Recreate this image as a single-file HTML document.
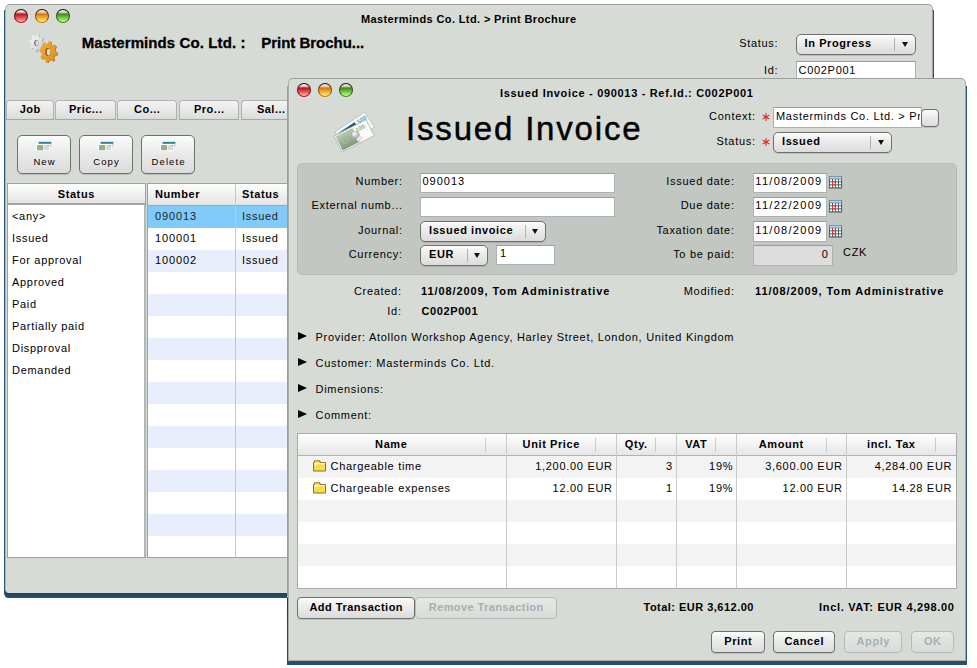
<!DOCTYPE html><html><head><meta charset="utf-8"><style>
html,body{margin:0;padding:0;background:#fff;width:977px;height:668px;overflow:hidden;position:relative;font-family:"Liberation Sans",sans-serif;}
.t{position:absolute;white-space:pre;font-family:"Liberation Sans",sans-serif;}
.r{position:absolute;}
</style></head><body>
<div class="r" style="left:4px;top:10px;width:930px;height:588px;background:#2a5272;border-radius:0 0 5px 5px;"></div>
<div class="r" style="left:5px;top:590px;width:928px;height:8px;background:linear-gradient(#1e3a50,#27506e);border-radius:0 0 4px 4px;"></div>
<div class="r" style="left:5px;top:4px;width:928px;height:589px;background:#d7dbd6;border-top:1px solid #9c9e9b;border-left:1px solid #b3b6b1;border-right:1px solid #a5a7a4;border-radius:5px 5px 4px 4px;box-sizing:border-box;"></div>
<div class="r" style="left:14px;top:9px;width:14px;height:14px;border-radius:50%;background:linear-gradient(#1a0606,#b81818);"></div>
<div class="r" style="left:15px;top:10.1px;width:12px;height:12.1px;border-radius:50%;background:linear-gradient(#f4eeee 0%,#e8d0d0 18%,#b81818 34%,#e86060 70%,#ffb8b0 100%);"></div>
<div class="r" style="left:35px;top:9px;width:14px;height:14px;border-radius:50%;background:linear-gradient(#1e0e00,#d87808);"></div>
<div class="r" style="left:36px;top:10.1px;width:12px;height:12.1px;border-radius:50%;background:linear-gradient(#f4eeee 0%,#e8d0d0 18%,#d87808 34%,#f8b838 70%,#fff890 100%);"></div>
<div class="r" style="left:56px;top:9px;width:14px;height:14px;border-radius:50%;background:linear-gradient(#061806,#3e8c18);"></div>
<div class="r" style="left:57px;top:10.1px;width:12px;height:12.1px;border-radius:50%;background:linear-gradient(#f4eeee 0%,#e8d0d0 18%,#3e8c18 34%,#80d050 70%,#c8ff90 100%);"></div>
<div class="t" style="left:361px;top:13.04px;font-size:11px;font-weight:bold;letter-spacing:0.38px;color:#000;line-height:12.65px;">Masterminds Co. Ltd. &gt; Print Brochure</div>
<svg class="r" style="left:0;top:0" width="80" height="80"><defs><linearGradient id="gs" x1="0" y1="0" x2="1" y2="1"><stop offset="0" stop-color="#fafafa"/><stop offset="1" stop-color="#c8c8c8"/></linearGradient><linearGradient id="go" x1="0" y1="0" x2="1" y2="1"><stop offset="0" stop-color="#f2ac3a"/><stop offset="1" stop-color="#d98f24"/></linearGradient></defs><path d="M43.39,42.97 L44.90,43.62 L44.52,46.23 L42.91,46.22 L41.92,48.09 L42.60,49.84 L40.80,51.35 L39.66,49.99 L37.86,50.47 L37.31,52.28 L35.15,51.82 L35.15,49.89 L33.59,48.70 L32.14,49.52 L30.87,47.36 L32.01,45.99 L31.61,43.83 L30.10,43.18 L30.48,40.57 L32.09,40.58 L33.08,38.71 L32.40,36.96 L34.20,35.45 L35.34,36.81 L37.14,36.33 L37.69,34.52 L39.85,34.98 L39.85,36.91 L41.41,38.10 L42.86,37.28 L44.13,39.44 L42.99,40.81Z" fill="#a0a0a0"/><path d="M42.49,42.37 L44.00,43.02 L43.62,45.63 L42.01,45.62 L41.02,47.49 L41.70,49.24 L39.90,50.75 L38.76,49.39 L36.96,49.87 L36.41,51.68 L34.25,51.22 L34.25,49.29 L32.69,48.10 L31.24,48.92 L29.97,46.76 L31.11,45.39 L30.71,43.23 L29.20,42.58 L29.58,39.97 L31.19,39.98 L32.18,38.11 L31.50,36.36 L33.30,34.85 L34.44,36.21 L36.24,35.73 L36.79,33.92 L38.95,34.38 L38.95,36.31 L40.51,37.50 L41.96,36.68 L43.23,38.84 L42.09,40.21Z" fill="url(#gs)"/><ellipse cx="36.300000000000004" cy="43.099999999999994" rx="2.2" ry="3.0" fill="#777"/><ellipse cx="36.9" cy="43.099999999999994" rx="1.54" ry="2.55" fill="#d7dbd6"/><path d="M56.19,51.89 L58.10,52.67 L57.64,55.80 L55.62,55.75 L54.44,57.97 L55.33,60.14 L53.16,61.96 L51.77,60.22 L49.63,60.78 L48.97,63.08 L46.37,62.53 L46.41,60.10 L44.56,58.69 L42.75,59.76 L41.23,57.16 L42.69,55.48 L42.21,52.91 L40.30,52.13 L40.76,49.00 L42.78,49.05 L43.96,46.83 L43.07,44.66 L45.24,42.84 L46.63,44.58 L48.77,44.02 L49.43,41.72 L52.03,42.27 L51.99,44.70 L53.84,46.11 L55.65,45.04 L57.17,47.64 L55.71,49.32Z" fill="#b8741a"/><path d="M55.29,51.29 L57.20,52.07 L56.74,55.20 L54.72,55.15 L53.54,57.37 L54.43,59.54 L52.26,61.36 L50.87,59.62 L48.73,60.18 L48.07,62.48 L45.47,61.93 L45.51,59.50 L43.66,58.09 L41.85,59.16 L40.33,56.56 L41.79,54.88 L41.31,52.31 L39.40,51.53 L39.86,48.40 L41.88,48.45 L43.06,46.23 L42.17,44.06 L44.34,42.24 L45.73,43.98 L47.87,43.42 L48.53,41.12 L51.13,41.67 L51.09,44.10 L52.94,45.51 L54.75,44.44 L56.27,47.04 L54.81,48.72Z" fill="url(#go)"/><ellipse cx="48.0" cy="52.099999999999994" rx="2.6" ry="4.0" fill="#8a5010"/><ellipse cx="48.599999999999994" cy="52.099999999999994" rx="1.8199999999999998" ry="3.4" fill="#d7dbd6"/></svg>
<div class="t" style="left:81.7px;top:34.42px;font-size:15px;font-weight:bold;letter-spacing:0.1px;color:#000;line-height:17.25px;-webkit-text-stroke:0.3px #000;">Masterminds Co. Ltd. :</div>
<div class="t" style="left:261.2px;top:34.42px;font-size:15px;font-weight:bold;letter-spacing:-0.02px;color:#000;line-height:17.25px;-webkit-text-stroke:0.3px #000;">Print Brochu...</div>
<div class="t" style="left:78.30000000000003px;width:700px;text-align:right;top:37.05px;font-size:11px;font-weight:normal;letter-spacing:0.7px;color:#000;line-height:12.65px;">Status:</div>
<div class="r" style="left:796px;top:34px;width:120px;height:21px;background:linear-gradient(#fbfbfb,#e9e9e9 50%,#dcdcdc);border:1px solid #6f706e;border-radius:5px;box-sizing:border-box;box-shadow:0 1px 0 rgba(0,0,0,.12);"></div>
<div class="r" style="left:894px;top:38px;width:1px;height:13px;background:#b0b0b0;"></div>
<div class="r" style="left:901.5px;top:42.2px;width:0;height:0;border-left:3.5px solid transparent;border-right:3.5px solid transparent;border-top:5px solid #111;"></div>
<div class="t" style="left:804.5px;top:37.05px;font-size:11px;font-weight:bold;letter-spacing:0.6px;color:#000;line-height:12.65px;">In Progress</div>
<div class="t" style="left:78.30000000000003px;width:700px;text-align:right;top:64.05px;font-size:11px;font-weight:normal;letter-spacing:0.7px;color:#000;line-height:12.65px;">Id:</div>
<div class="r" style="left:796px;top:61px;width:120px;height:29px;background:#fff;border:1px solid #aeb1b3;border-top-color:#9a9da0;box-sizing:border-box;"></div>
<div class="t" style="left:798.5px;top:64.05px;font-size:11px;font-weight:normal;letter-spacing:0.7px;color:#000;line-height:12.65px;">C002P001</div>
<div class="r" style="left:6px;top:100px;width:48px;height:20px;background:linear-gradient(#f3f3f3,#dcdcdc);border:1px solid #b2b4b1;border-bottom-color:#a6a8a5;border-radius:4px 4px 0 0;box-sizing:border-box;"></div>
<div class="t" style="left:-319.75px;width:700px;text-align:center;top:103.05px;font-size:11px;font-weight:bold;letter-spacing:0.5px;color:#000;line-height:12.65px;">Job</div>
<div class="r" style="left:55px;top:100px;width:61px;height:20px;background:linear-gradient(#f3f3f3,#dcdcdc);border:1px solid #b2b4b1;border-bottom-color:#a6a8a5;border-radius:4px 4px 0 0;box-sizing:border-box;"></div>
<div class="t" style="left:-264.25px;width:700px;text-align:center;top:103.05px;font-size:11px;font-weight:bold;letter-spacing:0.5px;color:#000;line-height:12.65px;">Pric...</div>
<div class="r" style="left:117px;top:100px;width:60px;height:20px;background:linear-gradient(#f3f3f3,#dcdcdc);border:1px solid #b2b4b1;border-bottom-color:#a6a8a5;border-radius:4px 4px 0 0;box-sizing:border-box;"></div>
<div class="t" style="left:-202.75px;width:700px;text-align:center;top:103.05px;font-size:11px;font-weight:bold;letter-spacing:0.5px;color:#000;line-height:12.65px;">Co...</div>
<div class="r" style="left:179px;top:100px;width:60px;height:20px;background:linear-gradient(#f3f3f3,#dcdcdc);border:1px solid #b2b4b1;border-bottom-color:#a6a8a5;border-radius:4px 4px 0 0;box-sizing:border-box;"></div>
<div class="t" style="left:-140.75px;width:700px;text-align:center;top:103.05px;font-size:11px;font-weight:bold;letter-spacing:0.5px;color:#000;line-height:12.65px;">Pro...</div>
<div class="r" style="left:241px;top:100px;width:60px;height:20px;background:linear-gradient(#f3f3f3,#dcdcdc);border:1px solid #b2b4b1;border-bottom-color:#a6a8a5;border-radius:4px 4px 0 0;box-sizing:border-box;"></div>
<div class="t" style="left:-78.75px;width:700px;text-align:center;top:103.05px;font-size:11px;font-weight:bold;letter-spacing:0.5px;color:#000;line-height:12.65px;">Sal...</div>
<div class="r" style="left:17px;top:135px;width:54px;height:39px;background:linear-gradient(#fbfbfb,#e9e9e9 50%,#dcdcdc);border:1px solid #6f706e;border-radius:5px;box-sizing:border-box;box-shadow:0 1px 0 rgba(0,0,0,.12);"></div>
<svg class="r" style="left:34.0px;top:139px" width="20" height="14" viewBox="34 139 20 14"><rect x="38" y="141" width="14" height="7" fill="#fff"/><rect x="38.6" y="141.8" width="12.8" height="2" fill="#2d7f92"/><rect x="50.4" y="144" width="1" height="3.5" fill="#bbb"/><rect x="36" y="144" width="14" height="7" fill="#fff"/><rect x="37" y="145" width="6" height="5.3" fill="#98b088"/><rect x="43.5" y="145.2" width="5.6" height="5" fill="#d9d9d9"/><rect x="47.5" y="145" width="1.6" height="1" fill="#7ab070"/></svg>
<div class="t" style="left:-305.45px;width:700px;text-align:center;top:157.40px;font-size:9.5px;font-weight:normal;letter-spacing:1.1px;color:#000;line-height:10.92px;">New</div>
<div class="r" style="left:79px;top:135px;width:54px;height:39px;background:linear-gradient(#fbfbfb,#e9e9e9 50%,#dcdcdc);border:1px solid #6f706e;border-radius:5px;box-sizing:border-box;box-shadow:0 1px 0 rgba(0,0,0,.12);"></div>
<svg class="r" style="left:96.0px;top:139px" width="20" height="14" viewBox="34 139 20 14"><rect x="38" y="141" width="14" height="7" fill="#fff"/><rect x="38.6" y="141.8" width="12.8" height="2" fill="#2d7f92"/><rect x="50.4" y="144" width="1" height="3.5" fill="#bbb"/><rect x="36" y="144" width="14" height="7" fill="#fff"/><rect x="37" y="145" width="6" height="5.3" fill="#98b088"/><rect x="43.5" y="145.2" width="5.6" height="5" fill="#d9d9d9"/><rect x="47.5" y="145" width="1.6" height="1" fill="#7ab070"/></svg>
<div class="t" style="left:-243.45px;width:700px;text-align:center;top:157.40px;font-size:9.5px;font-weight:normal;letter-spacing:1.1px;color:#000;line-height:10.92px;">Copy</div>
<div class="r" style="left:141px;top:135px;width:54px;height:39px;background:linear-gradient(#fbfbfb,#e9e9e9 50%,#dcdcdc);border:1px solid #6f706e;border-radius:5px;box-sizing:border-box;box-shadow:0 1px 0 rgba(0,0,0,.12);"></div>
<svg class="r" style="left:158.0px;top:139px" width="20" height="14" viewBox="34 139 20 14"><rect x="38" y="141" width="14" height="7" fill="#fff"/><rect x="38.6" y="141.8" width="12.8" height="2" fill="#2d7f92"/><rect x="50.4" y="144" width="1" height="3.5" fill="#bbb"/><rect x="36" y="144" width="14" height="7" fill="#fff"/><rect x="37" y="145" width="6" height="5.3" fill="#98b088"/><rect x="43.5" y="145.2" width="5.6" height="5" fill="#d9d9d9"/><rect x="47.5" y="145" width="1.6" height="1" fill="#7ab070"/></svg>
<div class="t" style="left:-181.45px;width:700px;text-align:center;top:157.40px;font-size:9.5px;font-weight:normal;letter-spacing:1.1px;color:#000;line-height:10.92px;">Delete</div>
<div class="r" style="left:7px;top:183px;width:139px;height:375px;background:#fff;border:1px solid #9fa19e;box-sizing:border-box;"></div>
<div class="r" style="left:8px;top:184px;width:137px;height:21px;background:linear-gradient(#fdfdfd,#e4e4e4);border-bottom:2px solid #a4a6a3;box-sizing:border-box;"></div>
<div class="r" style="left:144px;top:205px;width:2px;height:352px;background:#b5b7b4;"></div>
<div class="t" style="left:-273.7px;width:700px;text-align:center;top:188.04px;font-size:11px;font-weight:bold;letter-spacing:0.6px;color:#000;line-height:12.65px;">Status</div>
<div class="t" style="left:12px;top:210.04px;font-size:11px;font-weight:normal;letter-spacing:0.7px;color:#000;line-height:12.65px;">&lt;any&gt;</div>
<div class="t" style="left:12px;top:232.04px;font-size:11px;font-weight:normal;letter-spacing:0.7px;color:#000;line-height:12.65px;">Issued</div>
<div class="t" style="left:12px;top:254.04px;font-size:11px;font-weight:normal;letter-spacing:0.7px;color:#000;line-height:12.65px;">For approval</div>
<div class="t" style="left:12px;top:276.05px;font-size:11px;font-weight:normal;letter-spacing:0.7px;color:#000;line-height:12.65px;">Approved</div>
<div class="t" style="left:12px;top:298.05px;font-size:11px;font-weight:normal;letter-spacing:0.7px;color:#000;line-height:12.65px;">Paid</div>
<div class="t" style="left:12px;top:320.05px;font-size:11px;font-weight:normal;letter-spacing:0.7px;color:#000;line-height:12.65px;">Partially paid</div>
<div class="t" style="left:12px;top:342.05px;font-size:11px;font-weight:normal;letter-spacing:0.7px;color:#000;line-height:12.65px;">Dispproval</div>
<div class="t" style="left:12px;top:364.05px;font-size:11px;font-weight:normal;letter-spacing:0.7px;color:#000;line-height:12.65px;">Demanded</div>
<div class="r" style="left:147px;top:183px;width:153px;height:375px;background:#fff;border:1px solid #9fa19e;box-sizing:border-box;"></div>
<div class="r" style="left:148px;top:184px;width:152px;height:22px;background:linear-gradient(#fdfdfd,#e4e4e4);border-bottom:1px solid #a4a6a3;box-sizing:border-box;"></div>
<div class="r" style="left:148px;top:206px;width:152px;height:22px;background:#80cbfa;"></div>
<div class="r" style="left:148px;top:250px;width:152px;height:22px;background:#e8eefb;"></div>
<div class="r" style="left:148px;top:294px;width:152px;height:22px;background:#e8eefb;"></div>
<div class="r" style="left:148px;top:338px;width:152px;height:22px;background:#e8eefb;"></div>
<div class="r" style="left:148px;top:382px;width:152px;height:22px;background:#e8eefb;"></div>
<div class="r" style="left:148px;top:426px;width:152px;height:22px;background:#e8eefb;"></div>
<div class="r" style="left:148px;top:470px;width:152px;height:22px;background:#e8eefb;"></div>
<div class="r" style="left:148px;top:514px;width:152px;height:22px;background:#e8eefb;"></div>
<div class="r" style="left:235px;top:184px;width:1px;height:373px;background:#c4c6c3;"></div>
<div class="t" style="left:155px;top:188.04px;font-size:11px;font-weight:bold;letter-spacing:0.6px;color:#000;line-height:12.65px;">Number</div>
<div class="t" style="left:242px;top:188.04px;font-size:11px;font-weight:bold;letter-spacing:0.6px;color:#000;line-height:12.65px;">Status</div>
<div class="t" style="left:155px;top:210.04px;font-size:11px;font-weight:normal;letter-spacing:0.9px;color:#222;line-height:12.65px;">090013</div>
<div class="t" style="left:242px;top:210.04px;font-size:11px;font-weight:normal;letter-spacing:0.7px;color:#222;line-height:12.65px;">Issued</div>
<div class="t" style="left:155px;top:232.04px;font-size:11px;font-weight:normal;letter-spacing:0.9px;color:#000;line-height:12.65px;">100001</div>
<div class="t" style="left:242px;top:232.04px;font-size:11px;font-weight:normal;letter-spacing:0.7px;color:#000;line-height:12.65px;">Issued</div>
<div class="t" style="left:155px;top:254.04px;font-size:11px;font-weight:normal;letter-spacing:0.9px;color:#000;line-height:12.65px;">100002</div>
<div class="t" style="left:242px;top:254.04px;font-size:11px;font-weight:normal;letter-spacing:0.7px;color:#000;line-height:12.65px;">Issued</div>
<div class="r" style="left:287px;top:598px;width:680px;height:67px;background:linear-gradient(#1e3a50,#27506e);"></div>
<div class="r" style="left:966px;top:86px;width:1px;height:579px;background:#2a5272;"></div>
<div class="r" style="left:287px;top:86px;width:1px;height:512px;background:#9a9d99;"></div>
<div class="r" style="left:288px;top:78px;width:678px;height:583px;background:#d7dbd6;border-top:1px solid #9c9e9b;border-left:1px solid #a9aca7;border-right:1px solid #a5a7a4;border-bottom:1px solid #a9aba7;border-radius:5px 5px 0 0;box-sizing:border-box;"></div>
<div class="r" style="left:297px;top:83px;width:14px;height:14px;border-radius:50%;background:linear-gradient(#1a0606,#b81818);"></div>
<div class="r" style="left:298px;top:84.1px;width:12px;height:12.1px;border-radius:50%;background:linear-gradient(#f4eeee 0%,#e8d0d0 18%,#b81818 34%,#e86060 70%,#ffb8b0 100%);"></div>
<div class="r" style="left:318px;top:83px;width:14px;height:14px;border-radius:50%;background:linear-gradient(#1e0e00,#d87808);"></div>
<div class="r" style="left:319px;top:84.1px;width:12px;height:12.1px;border-radius:50%;background:linear-gradient(#f4eeee 0%,#e8d0d0 18%,#d87808 34%,#f8b838 70%,#fff890 100%);"></div>
<div class="r" style="left:339px;top:83px;width:14px;height:14px;border-radius:50%;background:linear-gradient(#061806,#3e8c18);"></div>
<div class="r" style="left:340px;top:84.1px;width:12px;height:12.1px;border-radius:50%;background:linear-gradient(#f4eeee 0%,#e8d0d0 18%,#3e8c18 34%,#80d050 70%,#c8ff90 100%);"></div>
<div class="t" style="left:500px;top:87.05px;font-size:11px;font-weight:bold;letter-spacing:0.68px;color:#000;line-height:12.65px;">Issued Invoice - 090013 - Ref.Id.: C002P001</div>
<svg class="r" style="left:320px;top:100px" width="70" height="70" viewBox="0 0 70 70">
<defs><linearGradient id="tb" x1="0" x2="1"><stop offset="0" stop-color="#2f7f9a"/><stop offset="1" stop-color="#1a4f66"/></linearGradient>
<linearGradient id="gb" x1="0" y1="0" x2="0" y2="1"><stop offset="0" stop-color="#b8ccb0"/><stop offset="1" stop-color="#7f9a76"/></linearGradient>
<radialGradient id="ball" cx="0.4" cy="0.35" r="0.7"><stop offset="0" stop-color="#ffffff"/><stop offset="1" stop-color="#9a9a9a"/></radialGradient></defs>
<g transform="translate(15,31.7) rotate(-33.7)">
<rect x="0" y="0" width="35.5" height="18" fill="#f6f6f6" stroke="#b9bcb9" stroke-width="0.8"/>
<rect x="1.5" y="3" width="20" height="4.5" fill="url(#tb)"/>
<text x="24" y="7" font-family="Liberation Sans" font-size="6" font-weight="bold" fill="#5aa0c8">500</text>
</g>
<g transform="translate(14,36) rotate(-27)">
<rect x="0" y="0" width="36" height="18" fill="#fbfbfb" stroke="#b0b4b0" stroke-width="0.8"/>
<rect x="1.2" y="1.2" width="19" height="15.6" fill="url(#gb)"/>
<circle cx="8" cy="9" r="3.2" fill="none" stroke="#a9bca2" stroke-width="0.8"/>
<text x="22" y="7" font-family="Liberation Sans" font-size="6" font-weight="bold" fill="#8fb088">100</text>
<circle cx="20" cy="8.5" r="3.8" fill="url(#ball)"/>
<ellipse cx="21.5" cy="14" rx="3.2" ry="2.2" fill="#e2e2e2"/>
</g></svg>
<div class="t" style="left:406px;top:110.13px;font-size:33px;font-weight:normal;letter-spacing:1.82px;color:#000;line-height:37.95px;-webkit-text-stroke:0.45px #000;">Issued Invoice</div>
<div class="t" style="left:55.7px;width:700px;text-align:right;top:110.05px;font-size:11px;font-weight:normal;letter-spacing:0.7px;color:#000;line-height:12.65px;">Context:</div>
<svg class="r" style="left:761.2px;top:112.2px" width="10" height="10" viewBox="-5 -5 10 10"><g stroke="#e02424" stroke-width="1.05" stroke-linecap="round"><line x1="0" y1="-3.4" x2="0" y2="3.4"/><line x1="-2.95" y1="-1.7" x2="2.95" y2="1.7"/><line x1="-2.95" y1="1.7" x2="2.95" y2="-1.7"/></g></svg>
<div class="r" style="left:773px;top:107px;width:149px;height:21px;background:#fff;border:1px solid #aeb1b3;border-top-color:#9a9da0;box-sizing:border-box;"></div>
<div class="t" style="left:776px;top:110.05px;font-size:11px;font-weight:normal;letter-spacing:0.7px;color:#000;line-height:12.65px;width:144px;overflow:hidden;">Masterminds Co. Ltd. &gt; Pr</div>
<div class="r" style="left:921px;top:109px;width:18px;height:18px;background:linear-gradient(#fbfbfb,#e9e9e9 50%,#dcdcdc);border:1px solid #6f706e;border-radius:4px;box-sizing:border-box;box-shadow:0 1px 0 rgba(0,0,0,.12);"></div>
<div class="t" style="left:55.7px;width:700px;text-align:right;top:135.04px;font-size:11px;font-weight:normal;letter-spacing:0.7px;color:#000;line-height:12.65px;">Status:</div>
<svg class="r" style="left:761.2px;top:137.2px" width="10" height="10" viewBox="-5 -5 10 10"><g stroke="#e02424" stroke-width="1.05" stroke-linecap="round"><line x1="0" y1="-3.4" x2="0" y2="3.4"/><line x1="-2.95" y1="-1.7" x2="2.95" y2="1.7"/><line x1="-2.95" y1="1.7" x2="2.95" y2="-1.7"/></g></svg>
<div class="r" style="left:773px;top:132px;width:119px;height:21px;background:linear-gradient(#fbfbfb,#e9e9e9 50%,#dcdcdc);border:1px solid #6f706e;border-radius:5px;box-sizing:border-box;box-shadow:0 1px 0 rgba(0,0,0,.12);"></div>
<div class="r" style="left:870px;top:136px;width:1px;height:13px;background:#b0b0b0;"></div>
<div class="r" style="left:877.5px;top:140.2px;width:0;height:0;border-left:3.5px solid transparent;border-right:3.5px solid transparent;border-top:5px solid #111;"></div>
<div class="t" style="left:782px;top:135.04px;font-size:11px;font-weight:bold;letter-spacing:0.6px;color:#000;line-height:12.65px;">Issued</div>
<div class="r" style="left:297px;top:163px;width:660px;height:112px;background:#c3c7c2;border:1px solid #b7bbb6;border-radius:5px;box-sizing:border-box;"></div>
<div class="t" style="left:-297.3px;width:700px;text-align:right;top:175.04px;font-size:11px;font-weight:normal;letter-spacing:0.7px;color:#000;line-height:12.65px;">Number:</div>
<div class="t" style="left:-297.3px;width:700px;text-align:right;top:199.04px;font-size:11px;font-weight:normal;letter-spacing:0.7px;color:#000;line-height:12.65px;">External numb...</div>
<div class="t" style="left:-297.3px;width:700px;text-align:right;top:224.04px;font-size:11px;font-weight:normal;letter-spacing:0.7px;color:#000;line-height:12.65px;">Journal:</div>
<div class="t" style="left:-297.3px;width:700px;text-align:right;top:248.04px;font-size:11px;font-weight:normal;letter-spacing:0.7px;color:#000;line-height:12.65px;">Currency:</div>
<div class="r" style="left:420px;top:173px;width:195px;height:20px;background:#fff;border:1px solid #aeb1b3;border-top-color:#9a9da0;box-sizing:border-box;"></div>
<div class="t" style="left:422.5px;top:175.04px;font-size:11px;font-weight:normal;letter-spacing:1.0px;color:#000;line-height:12.65px;">090013</div>
<div class="r" style="left:420px;top:197px;width:195px;height:20px;background:#fff;border:1px solid #aeb1b3;border-top-color:#9a9da0;box-sizing:border-box;"></div>
<div class="r" style="left:420px;top:221px;width:126px;height:21px;background:linear-gradient(#fbfbfb,#e9e9e9 50%,#dcdcdc);border:1px solid #6f706e;border-radius:5px;box-sizing:border-box;box-shadow:0 1px 0 rgba(0,0,0,.12);"></div>
<div class="r" style="left:525px;top:225px;width:1px;height:13px;background:#b0b0b0;"></div>
<div class="r" style="left:532.0px;top:229.2px;width:0;height:0;border-left:3.5px solid transparent;border-right:3.5px solid transparent;border-top:5px solid #111;"></div>
<div class="t" style="left:429px;top:224.04px;font-size:11px;font-weight:bold;letter-spacing:0.6px;color:#000;line-height:12.65px;">Issued invoice</div>
<div class="r" style="left:420px;top:245px;width:68px;height:21px;background:linear-gradient(#fbfbfb,#e9e9e9 50%,#dcdcdc);border:1px solid #6f706e;border-radius:5px;box-sizing:border-box;box-shadow:0 1px 0 rgba(0,0,0,.12);"></div>
<div class="r" style="left:467px;top:249px;width:1px;height:13px;background:#b0b0b0;"></div>
<div class="r" style="left:474.0px;top:253.2px;width:0;height:0;border-left:3.5px solid transparent;border-right:3.5px solid transparent;border-top:5px solid #111;"></div>
<div class="t" style="left:429px;top:248.04px;font-size:11px;font-weight:bold;letter-spacing:0.6px;color:#000;line-height:12.65px;">EUR</div>
<div class="r" style="left:496px;top:245px;width:59px;height:20px;background:#fff;border:1px solid #aeb1b3;border-top-color:#9a9da0;box-sizing:border-box;"></div>
<div class="t" style="left:500px;top:247.04px;font-size:11px;font-weight:normal;letter-spacing:0.7px;color:#000;line-height:12.65px;">1</div>
<div class="t" style="left:34.7px;width:700px;text-align:right;top:175.04px;font-size:11px;font-weight:normal;letter-spacing:0.7px;color:#000;line-height:12.65px;">Issued date:</div>
<div class="r" style="left:753px;top:173px;width:74px;height:20px;background:#fff;border:1px solid #aeb1b3;border-top-color:#9a9da0;box-sizing:border-box;"></div>
<div class="t" style="left:755.3px;top:175.04px;font-size:11px;font-weight:normal;letter-spacing:1.3px;color:#000;line-height:12.65px;">11/08/2009</div>
<svg class="r" style="left:829px;top:176px" width="15" height="14" viewBox="0 0 15 14"><rect x="1" y="1" width="13" height="12.5" fill="#bcc0bb"/><rect x="0" y="0" width="13" height="12.5" fill="#5a5c5e"/><rect x="0.5" y="0.5" width="12" height="2.2" fill="#a9d2fa"/><rect x="1" y="3.3" width="2" height="2" fill="#fff"/><rect x="4" y="3.3" width="2" height="2" fill="#fff"/><rect x="7" y="3.3" width="2" height="2" fill="#fff"/><rect x="10" y="3.3" width="2" height="2" fill="#fff"/><rect x="1" y="6.3" width="2" height="2" fill="#eaffff"/><rect x="4" y="6.3" width="2" height="2" fill="#eaffff"/><rect x="7" y="6.3" width="2" height="2" fill="#eaffff"/><rect x="10" y="6.3" width="2" height="2" fill="#eaffff"/><rect x="1" y="9.3" width="2" height="2" fill="#eaffff"/><rect x="4" y="9.3" width="2" height="2" fill="#eaffff"/><rect x="7" y="9.3" width="2" height="2" fill="#eaffff"/><rect x="10" y="9.3" width="2" height="2" fill="#eaffff"/><rect x="3.5" y="5.8" width="3" height="3" fill="none" stroke="#ff2a2a" stroke-width="1"/></svg>
<div class="t" style="left:34.7px;width:700px;text-align:right;top:199.04px;font-size:11px;font-weight:normal;letter-spacing:0.7px;color:#000;line-height:12.65px;">Due date:</div>
<div class="r" style="left:753px;top:197px;width:74px;height:20px;background:#fff;border:1px solid #aeb1b3;border-top-color:#9a9da0;box-sizing:border-box;"></div>
<div class="t" style="left:755.3px;top:199.04px;font-size:11px;font-weight:normal;letter-spacing:1.3px;color:#000;line-height:12.65px;">11/22/2009</div>
<svg class="r" style="left:829px;top:200px" width="15" height="14" viewBox="0 0 15 14"><rect x="1" y="1" width="13" height="12.5" fill="#bcc0bb"/><rect x="0" y="0" width="13" height="12.5" fill="#5a5c5e"/><rect x="0.5" y="0.5" width="12" height="2.2" fill="#a9d2fa"/><rect x="1" y="3.3" width="2" height="2" fill="#fff"/><rect x="4" y="3.3" width="2" height="2" fill="#fff"/><rect x="7" y="3.3" width="2" height="2" fill="#fff"/><rect x="10" y="3.3" width="2" height="2" fill="#fff"/><rect x="1" y="6.3" width="2" height="2" fill="#eaffff"/><rect x="4" y="6.3" width="2" height="2" fill="#eaffff"/><rect x="7" y="6.3" width="2" height="2" fill="#eaffff"/><rect x="10" y="6.3" width="2" height="2" fill="#eaffff"/><rect x="1" y="9.3" width="2" height="2" fill="#eaffff"/><rect x="4" y="9.3" width="2" height="2" fill="#eaffff"/><rect x="7" y="9.3" width="2" height="2" fill="#eaffff"/><rect x="10" y="9.3" width="2" height="2" fill="#eaffff"/><rect x="3.5" y="5.8" width="3" height="3" fill="none" stroke="#ff2a2a" stroke-width="1"/></svg>
<div class="t" style="left:34.7px;width:700px;text-align:right;top:224.04px;font-size:11px;font-weight:normal;letter-spacing:0.7px;color:#000;line-height:12.65px;">Taxation date:</div>
<div class="r" style="left:753px;top:221px;width:74px;height:21px;background:#fff;border:1px solid #aeb1b3;border-top-color:#9a9da0;box-sizing:border-box;"></div>
<div class="t" style="left:755.3px;top:224.04px;font-size:11px;font-weight:normal;letter-spacing:1.3px;color:#000;line-height:12.65px;">11/08/2009</div>
<svg class="r" style="left:829px;top:225px" width="15" height="14" viewBox="0 0 15 14"><rect x="1" y="1" width="13" height="12.5" fill="#bcc0bb"/><rect x="0" y="0" width="13" height="12.5" fill="#5a5c5e"/><rect x="0.5" y="0.5" width="12" height="2.2" fill="#a9d2fa"/><rect x="1" y="3.3" width="2" height="2" fill="#fff"/><rect x="4" y="3.3" width="2" height="2" fill="#fff"/><rect x="7" y="3.3" width="2" height="2" fill="#fff"/><rect x="10" y="3.3" width="2" height="2" fill="#fff"/><rect x="1" y="6.3" width="2" height="2" fill="#eaffff"/><rect x="4" y="6.3" width="2" height="2" fill="#eaffff"/><rect x="7" y="6.3" width="2" height="2" fill="#eaffff"/><rect x="10" y="6.3" width="2" height="2" fill="#eaffff"/><rect x="1" y="9.3" width="2" height="2" fill="#eaffff"/><rect x="4" y="9.3" width="2" height="2" fill="#eaffff"/><rect x="7" y="9.3" width="2" height="2" fill="#eaffff"/><rect x="10" y="9.3" width="2" height="2" fill="#eaffff"/><rect x="3.5" y="5.8" width="3" height="3" fill="none" stroke="#ff2a2a" stroke-width="1"/></svg>
<div class="t" style="left:34.7px;width:700px;text-align:right;top:248.04px;font-size:11px;font-weight:normal;letter-spacing:0.7px;color:#000;line-height:12.65px;">To be paid:</div>
<div class="r" style="left:753px;top:245px;width:80px;height:21px;background:#dcdcdc;border:1px solid #aeb1b3;border-top-color:#9a9da0;box-sizing:border-box;"></div>
<div class="t" style="left:128.7px;width:700px;text-align:right;top:248.04px;font-size:11px;font-weight:normal;letter-spacing:0.7px;color:#000;line-height:12.65px;">0</div>
<div class="t" style="left:843px;top:246.04px;font-size:11px;font-weight:normal;letter-spacing:0.7px;color:#000;line-height:12.65px;">CZK</div>
<div class="t" style="left:-298.3px;width:700px;text-align:right;top:285.05px;font-size:11px;font-weight:normal;letter-spacing:0.7px;color:#000;line-height:12.65px;">Created:</div>
<div class="t" style="left:421px;top:285.05px;font-size:11px;font-weight:bold;letter-spacing:0.91px;color:#000;line-height:12.65px;">11/08/2009, Tom Administrative</div>
<div class="t" style="left:-298.3px;width:700px;text-align:right;top:304.55px;font-size:11px;font-weight:normal;letter-spacing:0.7px;color:#000;line-height:12.65px;">Id:</div>
<div class="t" style="left:421.5px;top:304.55px;font-size:11px;font-weight:bold;letter-spacing:0.6px;color:#000;line-height:12.65px;">C002P001</div>
<div class="t" style="left:34.7px;width:700px;text-align:right;top:285.05px;font-size:11px;font-weight:normal;letter-spacing:0.7px;color:#000;line-height:12.65px;">Modified:</div>
<div class="t" style="left:755px;top:285.05px;font-size:11px;font-weight:bold;letter-spacing:0.91px;color:#000;line-height:12.65px;">11/08/2009, Tom Administrative</div>
<div class="r" style="left:297.8px;top:332.0px;width:0;height:0;border-top:4.6px solid transparent;border-bottom:4.6px solid transparent;border-left:9.4px solid #000;"></div>
<div class="t" style="left:315.5px;top:331.05px;font-size:11px;font-weight:normal;letter-spacing:0.7px;color:#000;line-height:12.65px;">Provider: Atollon Workshop Agency, Harley Street, London, United Kingdom</div>
<div class="r" style="left:297.8px;top:357.9px;width:0;height:0;border-top:4.6px solid transparent;border-bottom:4.6px solid transparent;border-left:9.4px solid #000;"></div>
<div class="t" style="left:315.5px;top:356.94px;font-size:11px;font-weight:normal;letter-spacing:0.7px;color:#000;line-height:12.65px;">Customer: Masterminds Co. Ltd.</div>
<div class="r" style="left:297.8px;top:383.8px;width:0;height:0;border-top:4.6px solid transparent;border-bottom:4.6px solid transparent;border-left:9.4px solid #000;"></div>
<div class="t" style="left:315.5px;top:382.85px;font-size:11px;font-weight:normal;letter-spacing:0.7px;color:#000;line-height:12.65px;">Dimensions:</div>
<div class="r" style="left:297.8px;top:409.7px;width:0;height:0;border-top:4.6px solid transparent;border-bottom:4.6px solid transparent;border-left:9.4px solid #000;"></div>
<div class="t" style="left:315.5px;top:408.75px;font-size:11px;font-weight:normal;letter-spacing:0.7px;color:#000;line-height:12.65px;">Comment:</div>
<div class="r" style="left:297px;top:433px;width:660px;height:156px;background:#fff;border:1px solid #a9aba8;box-sizing:border-box;"></div>
<div class="r" style="left:298px;top:434px;width:658px;height:22px;background:linear-gradient(#fefefe,#e6e6e6);border-bottom:1px solid #b0b2af;box-sizing:border-box;"></div>
<div class="r" style="left:298px;top:456px;width:658px;height:22px;background:#f3f3f3;"></div>
<div class="r" style="left:298px;top:500px;width:658px;height:22px;background:#f3f3f3;"></div>
<div class="r" style="left:298px;top:544px;width:658px;height:22px;background:#f3f3f3;"></div>
<div class="r" style="left:506px;top:434px;width:1px;height:154px;background:#c9cbc8;"></div>
<div class="r" style="left:616px;top:434px;width:1px;height:154px;background:#c9cbc8;"></div>
<div class="r" style="left:676px;top:434px;width:1px;height:154px;background:#c9cbc8;"></div>
<div class="r" style="left:736px;top:434px;width:1px;height:154px;background:#c9cbc8;"></div>
<div class="r" style="left:846px;top:434px;width:1px;height:154px;background:#c9cbc8;"></div>
<div class="r" style="left:485px;top:438px;width:1px;height:14px;background:#c9cbc8;"></div>
<div class="r" style="left:595px;top:438px;width:1px;height:14px;background:#c9cbc8;"></div>
<div class="r" style="left:655px;top:438px;width:1px;height:14px;background:#c9cbc8;"></div>
<div class="r" style="left:715px;top:438px;width:1px;height:14px;background:#c9cbc8;"></div>
<div class="r" style="left:826px;top:438px;width:1px;height:14px;background:#c9cbc8;"></div>
<div class="r" style="left:935px;top:438px;width:1px;height:14px;background:#c9cbc8;"></div>
<div class="t" style="left:41.3px;width:700px;text-align:center;top:437.55px;font-size:11px;font-weight:bold;letter-spacing:0.6px;color:#000;line-height:12.65px;">Name</div>
<div class="t" style="left:201.3px;width:700px;text-align:center;top:437.55px;font-size:11px;font-weight:bold;letter-spacing:0.6px;color:#000;line-height:12.65px;">Unit Price</div>
<div class="t" style="left:286.3px;width:700px;text-align:center;top:437.55px;font-size:11px;font-weight:bold;letter-spacing:0.6px;color:#000;line-height:12.65px;">Qty.</div>
<div class="t" style="left:346.3px;width:700px;text-align:center;top:437.55px;font-size:11px;font-weight:bold;letter-spacing:0.6px;color:#000;line-height:12.65px;">VAT</div>
<div class="t" style="left:431.3px;width:700px;text-align:center;top:437.55px;font-size:11px;font-weight:bold;letter-spacing:0.6px;color:#000;line-height:12.65px;">Amount</div>
<div class="t" style="left:541.3px;width:700px;text-align:center;top:437.55px;font-size:11px;font-weight:bold;letter-spacing:0.6px;color:#000;line-height:12.65px;">incl. Tax</div>
<svg class="r" style="left:312px;top:460px" width="16" height="13" viewBox="0 0 16 13"><defs><linearGradient id="fg0" x1="0" y1="0" x2="1" y2="1"><stop offset="0" stop-color="#fff3a0"/><stop offset="0.5" stop-color="#f8d840"/><stop offset="1" stop-color="#ffe860"/></linearGradient></defs><path d="M1.5,2.6 H2.5 V0.8 H8 V2.6 H13.5 V11 H1.5 Z" fill="url(#fg0)" stroke="#8f6d1c" stroke-width="1"/><rect x="2" y="3.2" width="11" height="1.1" fill="#fffdf0"/></svg>
<div class="t" style="left:330.5px;top:460.05px;font-size:11px;font-weight:normal;letter-spacing:0.7px;color:#000;line-height:12.65px;">Chargeable time</div>
<div class="t" style="left:-87.3px;width:700px;text-align:right;top:460.05px;font-size:11px;font-weight:normal;letter-spacing:0.7px;color:#000;line-height:12.65px;">1,200.00 EUR</div>
<div class="t" style="left:-27.3px;width:700px;text-align:right;top:460.05px;font-size:11px;font-weight:normal;letter-spacing:0.7px;color:#000;line-height:12.65px;">3</div>
<div class="t" style="left:33.2px;width:700px;text-align:right;top:460.05px;font-size:11px;font-weight:normal;letter-spacing:0.7px;color:#000;line-height:12.65px;">19%</div>
<div class="t" style="left:142.7px;width:700px;text-align:right;top:460.05px;font-size:11px;font-weight:normal;letter-spacing:0.7px;color:#000;line-height:12.65px;">3,600.00 EUR</div>
<div class="t" style="left:252.2px;width:700px;text-align:right;top:460.05px;font-size:11px;font-weight:normal;letter-spacing:0.7px;color:#000;line-height:12.65px;">4,284.00 EUR</div>
<svg class="r" style="left:312px;top:482px" width="16" height="13" viewBox="0 0 16 13"><defs><linearGradient id="fg1" x1="0" y1="0" x2="1" y2="1"><stop offset="0" stop-color="#fff3a0"/><stop offset="0.5" stop-color="#f8d840"/><stop offset="1" stop-color="#ffe860"/></linearGradient></defs><path d="M1.5,2.6 H2.5 V0.8 H8 V2.6 H13.5 V11 H1.5 Z" fill="url(#fg1)" stroke="#8f6d1c" stroke-width="1"/><rect x="2" y="3.2" width="11" height="1.1" fill="#fffdf0"/></svg>
<div class="t" style="left:330.5px;top:482.05px;font-size:11px;font-weight:normal;letter-spacing:0.7px;color:#000;line-height:12.65px;">Chargeable expenses</div>
<div class="t" style="left:-87.3px;width:700px;text-align:right;top:482.05px;font-size:11px;font-weight:normal;letter-spacing:0.7px;color:#000;line-height:12.65px;">12.00 EUR</div>
<div class="t" style="left:-27.3px;width:700px;text-align:right;top:482.05px;font-size:11px;font-weight:normal;letter-spacing:0.7px;color:#000;line-height:12.65px;">1</div>
<div class="t" style="left:33.2px;width:700px;text-align:right;top:482.05px;font-size:11px;font-weight:normal;letter-spacing:0.7px;color:#000;line-height:12.65px;">19%</div>
<div class="t" style="left:142.7px;width:700px;text-align:right;top:482.05px;font-size:11px;font-weight:normal;letter-spacing:0.7px;color:#000;line-height:12.65px;">12.00 EUR</div>
<div class="t" style="left:252.2px;width:700px;text-align:right;top:482.05px;font-size:11px;font-weight:normal;letter-spacing:0.7px;color:#000;line-height:12.65px;">14.28 EUR</div>
<div class="r" style="left:297px;top:597px;width:118px;height:22px;background:linear-gradient(#fbfbfb,#e9e9e9 50%,#dcdcdc);border:1px solid #6f706e;border-radius:4px;box-sizing:border-box;box-shadow:0 1px 0 rgba(0,0,0,.12);"></div>
<div class="t" style="left:6.25px;width:700px;text-align:center;top:601.04px;font-size:11px;font-weight:bold;letter-spacing:0.5px;color:#000;line-height:12.65px;">Add Transaction</div>
<div class="r" style="left:415px;top:597px;width:142px;height:22px;background:linear-gradient(#e6e8e5,#d9dbd8);border:1px solid #b8bab7;border-radius:4px;box-sizing:border-box;"></div>
<div class="t" style="left:136.2px;width:700px;text-align:center;top:601.04px;font-size:11px;font-weight:bold;letter-spacing:0.4px;color:#a6b0b3;line-height:12.65px;">Remove Transaction</div>
<div class="t" style="left:643.5px;top:601.04px;font-size:11px;font-weight:bold;letter-spacing:0.48px;color:#000;line-height:12.65px;">Total: EUR 3,612.00</div>
<div class="t" style="left:254.68px;width:700px;text-align:right;top:601.04px;font-size:11px;font-weight:bold;letter-spacing:0.68px;color:#000;line-height:12.65px;">Incl. VAT: EUR 4,298.00</div>
<div class="r" style="left:711px;top:631px;width:54px;height:22px;background:linear-gradient(#fbfbfb,#e9e9e9 50%,#dcdcdc);border:1px solid #6f706e;border-radius:4px;box-sizing:border-box;box-shadow:0 1px 0 rgba(0,0,0,.12);"></div>
<div class="t" style="left:388.3px;width:700px;text-align:center;top:635.04px;font-size:11px;font-weight:bold;letter-spacing:0.6px;color:#000;line-height:12.65px;">Print</div>
<div class="r" style="left:773px;top:631px;width:62px;height:22px;background:linear-gradient(#fbfbfb,#e9e9e9 50%,#dcdcdc);border:1px solid #6f706e;border-radius:4px;box-sizing:border-box;box-shadow:0 1px 0 rgba(0,0,0,.12);"></div>
<div class="t" style="left:454.3px;width:700px;text-align:center;top:635.04px;font-size:11px;font-weight:bold;letter-spacing:0.6px;color:#000;line-height:12.65px;">Cancel</div>
<div class="r" style="left:844px;top:631px;width:58px;height:22px;background:linear-gradient(#e6e8e5,#d9dbd8);border:1px solid #b8bab7;border-radius:4px;box-sizing:border-box;"></div>
<div class="t" style="left:523.3px;width:700px;text-align:center;top:635.04px;font-size:11px;font-weight:bold;letter-spacing:0.6px;color:#a6b0b3;line-height:12.65px;">Apply</div>
<div class="r" style="left:911px;top:631px;width:43px;height:22px;background:linear-gradient(#e6e8e5,#d9dbd8);border:1px solid #b8bab7;border-radius:4px;box-sizing:border-box;"></div>
<div class="t" style="left:582.8px;width:700px;text-align:center;top:635.04px;font-size:11px;font-weight:bold;letter-spacing:0.6px;color:#a6b0b3;line-height:12.65px;">OK</div>
</body></html>
